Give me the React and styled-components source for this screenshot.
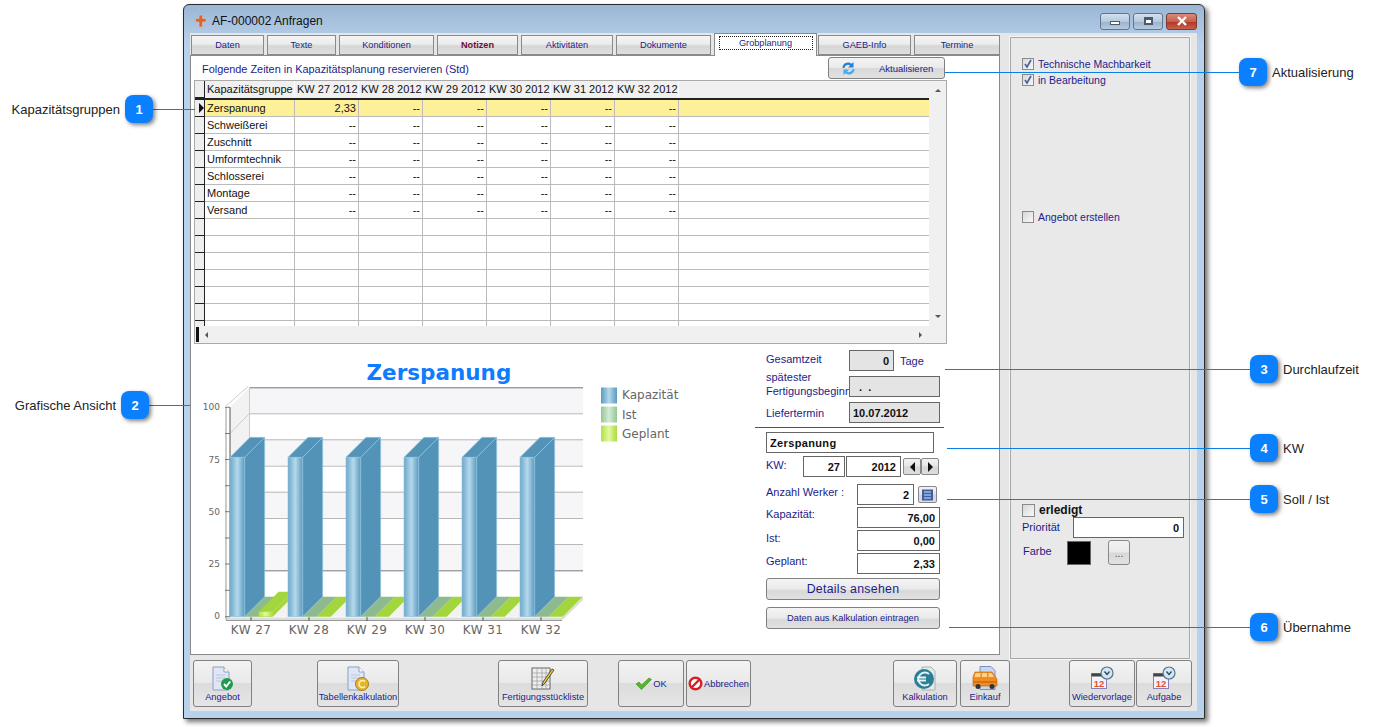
import React from 'react';
import styled, { createGlobalStyle } from 'styled-components';

const GlobalStyle = createGlobalStyle`
  html, body { margin: 0; padding: 0; background: #fff; }
  body { font-family: "Liberation Sans", Arial, sans-serif; }
  * { box-sizing: border-box; }
`;

const NAVY = '#1c1c8a';

const Page = styled.div`
  position: relative;
  width: 1374px;
  height: 727px;
  padding: 4px 0 0 183px;
  overflow: hidden;
  background: #fff;
`;

const Window = styled.div`
  width: 1022px;
  height: 715px;
  display: flex;
  flex-direction: column;
  border: 1px solid #2b2b2b;
  border-radius: 6px 6px 0 0;
  background: linear-gradient(180deg, #9bb6d4 0, #b9d2ec 40px, #b9d2ec 100%);
  box-shadow: 3px 3px 5px rgba(0, 0, 0, 0.55);
`;

const TitleBar = styled.div`
  height: 28px;
  flex: none;
  display: flex;
  align-items: center;
  padding: 4px 7px 0 10px;
`;

const TitleText = styled.span`
  margin-left: 5px;
  font-size: 12px;
  color: #111;
`;

const WindowControls = styled.div`
  margin-left: auto;
  display: flex;
  gap: 3px;
`;

const WindowButton = styled.div`
  width: ${(p) => (p.$close ? 31 : 30)}px;
  height: 17px;
  display: flex;
  align-items: center;
  justify-content: center;
  border: 1px solid ${(p) => (p.$close ? '#7a3b33' : '#5f7690')};
  border-radius: 3px;
  background: ${(p) =>
    p.$close
      ? 'linear-gradient(180deg, #d9897a 0, #c9604e 50%, #b03a28 55%, #c8604a 100%)'
      : 'linear-gradient(180deg, #d3e0ee 0, #b6c9dd 50%, #9db3cb 55%, #b7cbe0 100%)'};
`;

const MinGlyph = styled.span`
  width: 10px;
  height: 4px;
  margin-top: 4px;
  background: #fff;
  border: 1px solid #4a5b70;
`;

const MaxGlyph = styled.span`
  width: 9px;
  height: 8px;
  background: #fff;
  border: 2px solid #4a5b70;
  border-top-width: 3px;
`;

const Client = styled.div`
  flex: 1;
  min-height: 0;
  margin: 0 7px 7px 6px;
  display: flex;
  flex-direction: column;
  background: #e6e6e6;
`;

const UpperRow = styled.div`
  height: 626px;
  flex: none;
  display: flex;
`;

const MainColumn = styled.div`
  width: 810px;
  flex: none;
  padding-top: 2px;
`;

const Tabs = styled.div`
  height: 20px;
  padding-left: 1px;
  display: flex;
  align-items: flex-end;
  gap: 3px;
`;

const Tab = styled.div`
  position: relative;
  width: ${(p) => p.$w}px;
  height: ${(p) => (p.$active ? 23 : 20)}px;
  margin-bottom: ${(p) => (p.$active ? -1 : 0)}px;
  margin-right: ${(p) => (p.$active ? -2 : 0)}px;
  padding-bottom: 1px;
  z-index: ${(p) => (p.$active ? 2 : 0)};
  display: flex;
  align-items: center;
  justify-content: center;
  font-size: 9.2px;
  font-weight: ${(p) => (p.$bold ? 700 : 400)};
  color: ${(p) => (p.$bold ? '#6f1030' : NAVY)};
  border: 1px solid #8a8a8a;
  border-bottom: ${(p) => (p.$active ? 'none' : '1px solid #8a8a8a')};
  background: ${(p) =>
    p.$active ? '#fff' : 'linear-gradient(180deg, #f4f4f4 0, #ececec 45%, #d6d6d6 55%, #dedede 100%)'};
`;

const TabFocus = styled.span`
  width: 94px;
  height: 14px;
  margin-top: -4px;
  display: flex;
  align-items: center;
  justify-content: center;
  border: 1px dotted #222;
`;

const Pane = styled.div`
  height: 600px;
  border: 1px solid #8a8a8a;
  background: #fff;
`;

const PaneHeader = styled.div`
  height: 24px;
  display: flex;
  align-items: center;
  justify-content: space-between;
  padding: 0 54px 0 11px;
`;

const Caption = styled.span`
  font-size: 10.9px;
  color: ${NAVY};
  margin-top: 2px;
`;

const RefreshButton = styled.div`
  width: 117px;
  height: 22px;
  display: flex;
  align-items: center;
  padding-left: 12px;
  gap: 23px;
  font-size: 9.5px;
  color: ${NAVY};
  border: 1px solid #808080;
  border-radius: 3px;
  background: linear-gradient(180deg, #f4f4f4 0, #eaeaea 48%, #d8d8d8 52%, #e2e2e2 100%);
`;

const GridFrame = styled.div`
  width: 753px;
  height: 264px;
  margin-left: 3px;
  display: flex;
  flex-direction: column;
  border: 1px solid #aaa;
`;

const GridTop = styled.div`
  flex: 1;
  min-height: 0;
  display: flex;
`;

const GridTable = styled.div`
  flex: 1;
  min-width: 0;
  overflow: hidden;
`;

const HeaderRow = styled.div`
  height: 19px;
  padding-bottom: 1px;
  display: flex;
  background: #f0f0f0;
  border-bottom: 2px solid #222;
`;

const DataRow = styled.div`
  height: 17px;
  display: flex;
  background: ${(p) => (p.$selected ? '#fdf097' : '#fff')};
  border-bottom: 1px solid #bbb;
`;

const RowMark = styled.div`
  width: 10px;
  flex: none;
  display: flex;
  align-items: center;
  justify-content: flex-end;
  background: #eee;
  border-right: 1px solid #222;
  box-shadow: 0 1px 0 #222;
`;

const Cell = styled.div`
  width: ${(p) => p.$w}px;
  flex: none;
  display: flex;
  align-items: center;
  justify-content: ${(p) => (p.$right ? 'flex-end' : 'flex-start')};
  padding: 0 2px;
  font-size: 11px;
  color: #111;
  white-space: nowrap;
  overflow: hidden;
  border-right: 1px solid #bbb;
`;

const HeaderCell = styled(Cell)`
  border-right: 1px solid #fff;
`;

const VScroll = styled.div`
  width: 17px;
  flex: none;
  display: flex;
  flex-direction: column;
  align-items: center;
  justify-content: space-between;
  padding: 8px 0;
  background: #f0f0f0;
`;

const HScroll = styled.div`
  height: 17px;
  flex: none;
  display: flex;
  align-items: center;
  justify-content: space-between;
  padding: 0 24px 0 1px;
  background: #f0f0f0;
`;

const ScrollStart = styled.div`
  display: flex;
  align-items: center;
  gap: 6px;
`;

const EndMark = styled.span`
  width: 3px;
  height: 15px;
  background: #111;
`;

const Arrow = styled.span`
  width: 0;
  height: 0;
  border-style: solid;
  border-color: transparent;
  border-width: ${(p) => p.$size || 3}px;
  ${(p) => `border-${{ up: 'bottom', down: 'top', left: 'right', right: 'left' }[p.$dir]}-color: ${p.$color || '#555'};`}
  ${(p) => `border-${{ up: 'top', down: 'bottom', left: 'left', right: 'right' }[p.$dir]}-width: 0;`}
`;

const LowerRow = styled.div`
  margin-top: 1px;
  display: flex;
`;

const ChartSvg = styled.svg`
  width: 500px;
  height: 310px;
  flex: none;
  display: block;
`;

const Form = styled.div`
  width: 190px;
  margin-left: 64px;
  padding-left: 11px;
`;

const FormRow = styled.div`
  height: 21px;
  margin-top: ${(p) => p.$mt}px;
  display: flex;
  align-items: center;
`;

const Label = styled.span`
  width: ${(p) => p.$w}px;
  flex: none;
  padding-bottom: ${(p) => p.$up || 0}px;
  font-size: 11px;
  line-height: 14px;
  color: ${NAVY};
  white-space: nowrap;
`;

const Field = styled.div`
  width: ${(p) => p.$w}px;
  height: 21px;
  flex: none;
  display: flex;
  align-items: center;
  justify-content: ${(p) => (p.$left ? 'flex-start' : 'flex-end')};
  padding: 0 ${(p) => (p.$left ? 3 : 4)}px;
  margin-left: ${(p) => p.$ml || 0}px;
  font-size: 11px;
  font-weight: 700;
  color: #111;
  letter-spacing: ${(p) => (p.$wide ? 0.35 : 0)}px;
  border: 1px solid #666;
  background: ${(p) => (p.$readonly ? '#e4e4e4' : '#fff')};
`;

const Unit = styled.span`
  margin-left: 6px;
  font-size: 11px;
  color: ${NAVY};
`;

const Separator = styled.div`
  width: 189px;
  height: 1px;
  margin: 4px 0 4px -11px;
  background: #555;
`;

const SmallButton = styled.div`
  width: ${(p) => p.$w}px;
  height: 17px;
  flex: none;
  display: flex;
  align-items: center;
  justify-content: center;
  margin-left: ${(p) => p.$ml || 0}px;
  border: 1px solid #888;
  border-radius: 2px;
  background: linear-gradient(180deg, #f2f2f2 0, #e6e6e6 48%, #d6d6d6 52%, #dedede 100%);
`;

const WideButton = styled.div`
  width: 174px;
  height: 22px;
  margin-top: ${(p) => p.$mt}px;
  display: flex;
  align-items: center;
  justify-content: center;
  font-size: ${(p) => p.$size}px;
  letter-spacing: ${(p) => (p.$size > 11 ? 0.3 : 0)}px;
  color: ${NAVY};
  border: 1px solid #808080;
  border-radius: 3px;
  background: linear-gradient(180deg, #f4f4f4 0, #eaeaea 48%, #d8d8d8 60%, #e2e2e2 100%);
`;

const SidePanel = styled.div`
  width: 180px;
  height: 622px;
  margin: 4px 0 0 10px;
  padding: 20px 5px 0 11px;
  border: 1px solid #a8a8a8;
  background: #e9e9e9;
  outline: 1px solid #f6f6f6;
`;

const CheckRow = styled.div`
  height: ${(p) => (p.$big ? 14 : 12)}px;
  margin-top: ${(p) => p.$mt || 0}px;
  display: flex;
  align-items: center;
  gap: 4px;
  font-size: ${(p) => (p.$big ? 12 : 10.5)}px;
  font-weight: ${(p) => (p.$big ? 700 : 400)};
  color: ${(p) => (p.$big ? '#111' : NAVY)};
`;

const CheckBox = styled.span`
  width: ${(p) => (p.$big ? 13 : 12)}px;
  height: ${(p) => (p.$big ? 13 : 12)}px;
  flex: none;
  display: flex;
  align-items: center;
  justify-content: center;
  border: 1px solid #8a8a8a;
  background: linear-gradient(135deg, #d8d8d8, #f8f8f8);
`;

const SideRow = styled.div`
  margin-top: ${(p) => p.$mt}px;
  padding-left: ${(p) => p.$indent || 0}px;
  display: flex;
  align-items: center;
`;

const ColorSwatch = styled.span`
  width: 24px;
  height: 24px;
  flex: none;
  background: #000;
  border: 1px solid #666;
`;

const DotsButton = styled.div`
  width: 22px;
  height: 25px;
  margin-left: 17px;
  display: flex;
  align-items: flex-end;
  justify-content: center;
  padding-bottom: 5px;
  font-size: 10px;
  color: #444;
  border: 1px solid #888;
  border-radius: 3px;
  background: linear-gradient(180deg, #f2f2f2 0, #eaeaea 48%, #d8d8d8 52%, #e2e2e2 100%);
`;

const Toolbar = styled.div`
  height: 47px;
  margin-top: 1px;
  padding-left: 3px;
  display: flex;
`;

const ToolButton = styled.div`
  width: ${(p) => p.$w}px;
  flex: none;
  margin-left: ${(p) => p.$ml || 0}px;
  display: flex;
  flex-direction: ${(p) => (p.$inline ? 'row' : 'column')};
  align-items: center;
  justify-content: ${(p) => (p.$inline ? 'center' : 'flex-start')};
  padding-top: ${(p) => (p.$inline ? 0 : 5)}px;
  gap: ${(p) => (p.$inline ? 1 : 0)}px;
  font-size: 9.3px;
  color: ${NAVY};
  white-space: nowrap;
  border: 1px solid #808080;
  border-radius: 3px;
  background: linear-gradient(180deg, #f3f3f3 0, #e9e9e9 48%, #dcdcdc 50%, #e5e5e5 100%);
`;

const ToolLabel = styled.span`
  margin-top: -1px;
  line-height: 12px;
`;

const Callout = styled.div`
  position: absolute;
  top: ${(p) => p.$y - 14}px;
  left: ${(p) => p.$x}px;
  width: 28px;
  height: 28px;
  display: flex;
  align-items: center;
  justify-content: center;
  font-size: 13px;
  font-weight: 700;
  color: #fff;
  border-radius: 8px;
  background: #0a80ff;
  box-shadow: 2px 2px 4px rgba(0, 0, 0, 0.5);
`;

const CalloutLine = styled.div`
  position: absolute;
  top: ${(p) => p.$y}px;
  left: ${(p) => p.$from}px;
  width: ${(p) => p.$to - p.$from}px;
  height: 1px;
  background: #0a7fe6;
`;

const CalloutText = styled.span`
  position: absolute;
  top: ${(p) => p.$y - 8}px;
  ${(p) => (p.$right != null ? `right: ${1374 - p.$right}px;` : `left: ${p.$x}px;`)}
  font-size: 13px;
  line-height: 18px;
  color: #222;
  white-space: nowrap;
`;

const ChartText = styled.text`
  font-family: "DejaVu Sans", Verdana, sans-serif;
  font-size: ${(p) => p.$size}px;
  font-weight: ${(p) => (p.$bold ? 700 : 400)};
  fill: ${(p) => p.$color || '#666'};
`;

const tabs = [
  { label: 'Daten', w: 73 },
  { label: 'Texte', w: 69 },
  { label: 'Konditionen', w: 95 },
  { label: 'Notizen', w: 81, bold: true },
  { label: 'Aktivitäten', w: 92 },
  { label: 'Dokumente', w: 95 },
  { label: 'Grobplanung', w: 103, active: true },
  { label: 'GAEB-Info', w: 93 },
  { label: 'Termine', w: 86 },
];

const weeks = [27, 28, 29, 30, 31, 32];
const groups = ['Zerspanung', 'Schweißerei', 'Zuschnitt', 'Umformtechnik', 'Schlosserei', 'Montage', 'Versand'];
const emptyRows = 7;

const callouts = [
  { n: 1, x: 125, y: 109, from: 153, to: 195, text: 'Kapazitätsgruppen', right: 120 },
  { n: 2, x: 121, y: 405, from: 149, to: 190, text: 'Grafische Ansicht', right: 116 },
  { n: 3, x: 1250, y: 369, from: 945, to: 1250, text: 'Durchlaufzeit', left: 1283 },
  { n: 4, x: 1250, y: 448, from: 947, to: 1250, text: 'KW', left: 1283 },
  { n: 5, x: 1250, y: 499, from: 947, to: 1250, text: 'Soll / Ist', left: 1283 },
  { n: 6, x: 1250, y: 627, from: 949, to: 1250, text: 'Übernahme', left: 1283 },
  { n: 7, x: 1239, y: 72, from: 945, to: 1239, text: 'Aktualisierung', left: 1272 },
];

const AppIcon = () => (
  <svg width="13" height="14" viewBox="0 0 13 14">
    <path d="M5 1h3.5v3.5H12V8H8.5v5H5V8H1.5V4.5H5z" fill="#e2622a" stroke="#c9c0b8" strokeWidth="0.7" />
  </svg>
);

const CloseGlyph = () => (
  <svg width="12" height="10" viewBox="0 0 12 10">
    <path d="M2 1l8 8M10 1L2 9" stroke="#fff" strokeWidth="2.4" />
  </svg>
);

const RefreshIcon = () => (
  <svg width="15" height="15" viewBox="0 0 15 15">
    <path d="M1.5 7a5.5 5.5 0 0 1 9-4.2L12.5 1v5.500H7l2-2A3.500 3.500 0 0 0 3.500 7z" fill="#2281d8" />
    <path d="M13.500 8a5.500 5.500 0 0 1-9 4.200L2.500 14V8.500H8l-2 2A3.500 3.500 0 0 0 11.500 8z" fill="#45aaee" />
  </svg>
);

const TickMark = () => (
  <svg width="10" height="10" viewBox="0 0 10 10">
    <path d="M2 5l2 3 4-7" fill="none" stroke="#3f5f9f" strokeWidth="1.6" />
  </svg>
);

const PlannerIcon = () => (
  <svg width="13" height="12" viewBox="0 0 13 12">
    <rect x="1" y="0.5" width="11" height="11" fill="#3d5ea8" />
    <path d="M3 3h7M3 6h7M3 9h7" stroke="#d7e1f2" strokeWidth="1.2" />
  </svg>
);

const DocBase = () => (
  <>
    <path d="M3 1h11l5 5v18H3z" fill="#dfe7f5" stroke="#8d9fc4" />
    <path d="M14 1v5h5" fill="#fff" stroke="#8d9fc4" />
    <path d="M6 9h9M6 12h9M6 15h6" stroke="#b9c6de" />
  </>
);

const DocCheckIcon = () => (
  <svg width="26" height="26" viewBox="0 0 26 26">
    <DocBase />
    <circle cx="17" cy="18" r="6" fill="#1d9a4a" />
    <path d="M14 18l2.2 2.5 4-5" fill="none" stroke="#fff" strokeWidth="2" />
  </svg>
);

const DocCoinIcon = () => (
  <svg width="26" height="26" viewBox="0 0 26 26">
    <DocBase />
    <circle cx="17" cy="18" r="6.5" fill="#e5b52c" stroke="#a97e16" />
    <path d="M20 15.5a3.5 3.5 0 1 0 0 5" fill="none" stroke="#fff2c0" strokeWidth="1.6" />
  </svg>
);

const SheetPencilIcon = () => (
  <svg width="26" height="26" viewBox="0 0 26 26">
    <rect x="2" y="2" width="18" height="21" fill="#eee" stroke="#666" />
    <path d="M2 7h18M2 11h18M2 15h18M2 19h18M7 2v21M12 2v21M16 2v21" stroke="#999" strokeWidth="0.7" />
    <path d="M24 4l-9 13-3 3 1-4 9-13z" fill="#e8c83c" stroke="#333" strokeWidth="0.8" />
  </svg>
);

const OkIcon = () => (
  <svg width="17" height="13" viewBox="0 0 17 13">
    <path d="M1 7l3-2 2.5 3L14 1l2.500 1.500L6.500 12.500z" fill="#55b52f" stroke="#3b8f1f" strokeWidth="0.6" />
  </svg>
);

const StopIcon = () => (
  <svg width="15" height="15" viewBox="0 0 15 15">
    <circle cx="7.5" cy="7.5" r="5.8" fill="#fff" stroke="#d81f26" strokeWidth="2.4" />
    <path d="M3.5 11.5l8-8" stroke="#d81f26" strokeWidth="2.4" />
  </svg>
);

const EuroDocIcon = () => (
  <svg width="26" height="26" viewBox="0 0 26 26">
    <path d="M10 1h9l4 4v19H10z" fill="#e4e9e8" stroke="#a9b4b2" />
    <circle cx="12" cy="13" r="10" fill="#2b7f95" />
    <path d="M17 8a6.500 6.500 0 1 0 0 10M5 11.500h9M5 14.500h9" fill="none" stroke="#e6f3f6" strokeWidth="1.8" />
  </svg>
);

const VanIcon = () => (
  <svg width="26" height="26" viewBox="0 0 26 26">
    <path d="M8 0.5h11l4 4v19H8z" fill="#c9d5ee" stroke="#7c90bf" />
    <path d="M1 11l2-5h17l5 7v7H1z" fill="#f08c1e" stroke="#b8620c" strokeWidth="0.6" />
    <path d="M3.500 7h5v4h-6zM10 7h5v4h-5zM16.500 7h3l2.500 4h-5.500z" fill="#ffd18a" />
    <rect x="1" y="15" width="24" height="2" fill="#d8700e" />
    <circle cx="6" cy="20.5" r="2.5" fill="#333" />
    <circle cx="20" cy="20.5" r="2.5" fill="#333" />
  </svg>
);

const CalendarClockIcon = () => (
  <svg width="26" height="26" viewBox="0 0 26 26">
    <rect x="2.5" y="7.5" width="15" height="15" fill="#f4f2ff" stroke="#8880b8" />
    <rect x="2.5" y="7.5" width="15" height="3" fill="#444" />
    <text x="10" y="20.5" textAnchor="middle" fontFamily="Liberation Sans" fontSize="9.5" fontWeight="700" fill="#e8501e">12</text>
    <circle cx="18" cy="7" r="6" fill="#d5e6f3" stroke="#54748c" strokeWidth="1.2" />
    <path d="M15.500 5.500l2.500 3 2.500-3" fill="none" stroke="#26485f" strokeWidth="1.3" />
  </svg>
);

// chart coordinates are the reference's own, offset by the viewBox
const DEPTH = 20;
const FLOOR = 266.7;
const tickYs = [57.3, 83.5, 109.5, 135.7, 161.7, 188, 214, 240.3, 266.7];
const wallLines = [37.3, 63.3, 89.3, 115.7, 141.7, 168, 194, 220.3];

const Bar = ({ x, week }) => {
  const top = 107.3;
  const front = 14.7;
  return (
    <g>
      <path d={`M${x + front} ${top}l${DEPTH} ${-DEPTH}V${FLOOR - DEPTH}l${-DEPTH} ${DEPTH}z`} fill="#5493b8" stroke="#9ccbe4" strokeWidth="0.6" />
      <path d={`M${x} ${top}l${DEPTH} ${-DEPTH}h${front}l${-DEPTH} ${DEPTH}z`} fill="#5493b8" stroke="#9ccbe4" strokeWidth="0.6" />
      <rect x={x} y={top} width={front} height={FLOOR - top} fill="url(#barFront)" stroke="#8fc2de" strokeWidth="0.6" />
      <path d={`M${x + front} ${FLOOR}h14l${DEPTH} ${-DEPTH}h-14z`} fill="#8dbb8e" />
      {week === 27 ? (
        <>
          <path d={`M${x + front + 14} 261.7l${DEPTH} ${-DEPTH}h14l${-DEPTH} ${DEPTH}z`} fill="#a3d63c" />
          <path d={`M${x + front + 28} 261.7l${DEPTH} ${-DEPTH}v5l${-DEPTH} ${DEPTH}z`} fill="#a3d63c" />
          <rect x={x + front + 14} y="261.7" width="14" height="5" fill="url(#planFront)" stroke="#a3d63c" strokeWidth="0.5" />
        </>
      ) : (
        <path d={`M${x + front + 14} ${FLOOR}h14l${DEPTH} ${-DEPTH}h-14z`} fill="#a3d63c" />
      )}
      <ChartText x={x + 21} y="284" textAnchor="middle" $size={12} $color="#666" letterSpacing="0.4">KW {week}</ChartText>
      <path d={`M${x + 21} 267v4`} stroke="#555" />
    </g>
  );
};

const Chart = () => (
  <ChartSvg viewBox="1 -5 500 310">
    <defs>
      <linearGradient id="barFront" x1="0" x2="1" y1="0" y2="0">
        <stop offset="0" stopColor="#6ea7c9" />
        <stop offset="0.5" stopColor="#b4d9ec" />
        <stop offset="1" stopColor="#5b9abf" />
      </linearGradient>
      <linearGradient id="planFront" x1="0" x2="1" y1="0" y2="0">
        <stop offset="0" stopColor="#b0e04a" />
        <stop offset="0.5" stopColor="#e4f8a0" />
        <stop offset="1" stopColor="#a8dc40" />
      </linearGradient>
      <linearGradient id="legendBlue" x1="0" x2="1" y1="0" y2="0">
        <stop offset="0" stopColor="#5b9abf" />
        <stop offset="0.5" stopColor="#b4d9ec" />
        <stop offset="1" stopColor="#5b9abf" />
      </linearGradient>
      <linearGradient id="legendGreen" x1="0" x2="1" y1="0" y2="0">
        <stop offset="0" stopColor="#93c596" />
        <stop offset="0.5" stopColor="#d5ecd5" />
        <stop offset="1" stopColor="#93c596" />
      </linearGradient>
    </defs>
    <ChartText x="176.5" y="29.5" $size={21.5} $bold $color="#0f7bff">Zerspanung</ChartText>

    {wallLines.map((y, i) => (
      <g key={y}>
        {i % 2 === 0 && <rect x="59.3" y={y} width="333.7" height="26" fill="#f6f6f8" />}
        <path d={`M59.3 ${y + 0.5}H393`} stroke={i === 0 || i === 7 ? '#777' : '#b8b8b8'} />
      </g>
    ))}
    <path d="M40 57.3L59.3 37.3V246.7L40 266.7z" fill="#f2f2f2" />
    <path d="M59.5 37.3V246.7" stroke="#ccc" />
    <path d="M36 56L58 36.5" stroke="#ccc" />
    <path d="M40 83.5L59.3 63.5" stroke="#ccc" />
    <path d="M40 266.7L59.3 246.7H393L372 266.7z" fill="#f2f2f2" />
    <path d="M36 267.5H372L393 247V250L372 270.5H36z" fill="#dcdcdc" />
    <path d="M36 270.5H372" stroke="#999" />

    <path d="M36 57.3V270" stroke="#999" />
    <path d="M40 57.3V267" stroke="#555" />
    {tickYs.map((y) => (
      <path key={y} d={`M35 ${y}h5`} stroke="#777" />
    ))}
    {[[100, 57], [75, 109.5], [50, 162], [25, 214], [0, 266]].map(([v, y]) => (
      <ChartText key={v} x="30" y={y + 3} textAnchor="end" $size={9}>{v}</ChartText>
    ))}

    {weeks.map((w, i) => (
      <Bar key={w} x={40 + i * 58} week={w} />
    ))}

    <rect x="411" y="37.5" width="16" height="16" fill="url(#legendBlue)" />
    <rect x="411" y="56.5" width="16" height="16" fill="url(#legendGreen)" />
    <rect x="411" y="75.5" width="16" height="16" fill="url(#planFront)" />
    <ChartText x="432" y="49" $size={12}>Kapazität</ChartText>
    <ChartText x="432" y="68.5" $size={12}>Ist</ChartText>
    <ChartText x="432" y="88" $size={12}>Geplant</ChartText>
  </ChartSvg>
);

const CapacityGrid = () => (
  <GridFrame>
    <GridTop>
      <GridTable>
        <HeaderRow>
          <RowMark />
          <HeaderCell $w={90}>Kapazitätsgruppe</HeaderCell>
          {weeks.map((w) => (
            <HeaderCell key={w} $w={64}>KW {w} 2012</HeaderCell>
          ))}
        </HeaderRow>
        {groups.map((g, i) => (
          <DataRow key={g} $selected={i === 0}>
            <RowMark>{i === 0 && <Arrow $dir="right" $size={5} $color="#111" />}</RowMark>
            <Cell $w={90}>{g}</Cell>
            {weeks.map((w) => (
              <Cell key={w} $w={64} $right>{i === 0 && w === 27 ? '2,33' : '--'}</Cell>
            ))}
          </DataRow>
        ))}
        {Array.from({ length: emptyRows }, (_, i) => (
          <DataRow key={i}>
            <RowMark />
            <Cell $w={90} />
            {weeks.map((w) => (
              <Cell key={w} $w={64} />
            ))}
          </DataRow>
        ))}
      </GridTable>
      <VScroll>
        <Arrow $dir="up" />
        <Arrow $dir="down" />
      </VScroll>
    </GridTop>
    <HScroll>
      <ScrollStart>
        <EndMark />
        <Arrow $dir="left" />
      </ScrollStart>
      <Arrow $dir="right" />
    </HScroll>
  </GridFrame>
);

const DetailForm = () => (
  <Form>
    <FormRow $mt={5}>
      <Label $w={83} $up={3}>Gesamtzeit</Label>
      <Field $w={45} $readonly>0</Field>
      <Unit>Tage</Unit>
    </FormRow>
    <FormRow $mt={5}>
      <Label $w={83} $up={5}>spätester<br />Fertigungsbeginn</Label>
      <Field $w={91} $readonly $left>&nbsp;&nbsp;.&nbsp;&nbsp;.</Field>
    </FormRow>
    <FormRow $mt={5}>
      <Label $w={83} $up={0}>Liefertermin</Label>
      <Field $w={91} $readonly $left>10.07.2012</Field>
    </FormRow>
    <Separator />
    <Field $w={168} $left $wide>Zerspanung</Field>
    <FormRow $mt={3}>
      <Label $w={37} $up={3}>KW:</Label>
      <Field $w={42}>27</Field>
      <Field $w={55} $ml={1}>2012</Field>
      <SmallButton $w={18} $ml={2}><Arrow $dir="left" $size={5} $color="#111" /></SmallButton>
      <SmallButton $w={18}><Arrow $dir="right" $size={5} $color="#111" /></SmallButton>
    </FormRow>
    <FormRow $mt={7}>
      <Label $w={91} $up={5}>Anzahl Werker :</Label>
      <Field $w={57}>2</Field>
      <SmallButton $w={19} $ml={4}><PlannerIcon /></SmallButton>
    </FormRow>
    <FormRow $mt={2}>
      <Label $w={91} $up={7}>Kapazität:</Label>
      <Field $w={83}>76,00</Field>
    </FormRow>
    <FormRow $mt={2}>
      <Label $w={91} $up={5}>Ist:</Label>
      <Field $w={83}>0,00</Field>
    </FormRow>
    <FormRow $mt={2}>
      <Label $w={91} $up={5}>Geplant:</Label>
      <Field $w={83}>2,33</Field>
    </FormRow>
    <WideButton $mt={4} $size={12.3}>Details ansehen</WideButton>
    <WideButton $mt={7} $size={9.3}>Daten aus Kalkulation eintragen</WideButton>
  </Form>
);

const Side = () => (
  <SidePanel>
    <CheckRow><CheckBox><TickMark /></CheckBox>Technische Machbarkeit</CheckRow>
    <CheckRow $mt={4}><CheckBox><TickMark /></CheckBox>in Bearbeitung</CheckRow>
    <CheckRow $mt={125}><CheckBox />Angebot erstellen</CheckRow>
    <CheckRow $mt={280} $big><CheckBox $big />erledigt</CheckRow>
    <SideRow $mt={0}>
      <Label $w={51} $up={2}>Priorität</Label>
      <Field $w={111}>0</Field>
    </SideRow>
    <SideRow $mt={2} $indent={1}>
      <Label $w={44} $up={4}>Farbe</Label>
      <ColorSwatch />
      <DotsButton>...</DotsButton>
    </SideRow>
  </SidePanel>
);

const BottomBar = () => (
  <Toolbar>
    <ToolButton $w={59}><DocCheckIcon /><ToolLabel>Angebot</ToolLabel></ToolButton>
    <ToolButton $w={82} $ml={65}><DocCoinIcon /><ToolLabel>Tabellenkalkulation</ToolLabel></ToolButton>
    <ToolButton $w={90} $ml={99}><SheetPencilIcon /><ToolLabel>Fertigungsstückliste</ToolLabel></ToolButton>
    <ToolButton $w={66} $ml={30} $inline><OkIcon />OK</ToolButton>
    <ToolButton $w={65} $ml={2} $inline><StopIcon />Abbrechen</ToolButton>
    <ToolButton $w={64} $ml={142}><EuroDocIcon /><ToolLabel>Kalkulation</ToolLabel></ToolButton>
    <ToolButton $w={50} $ml={3}><VanIcon /><ToolLabel>Einkauf</ToolLabel></ToolButton>
    <ToolButton $w={66} $ml={59}><CalendarClockIcon /><ToolLabel>Wiedervorlage</ToolLabel></ToolButton>
    <ToolButton $w={56} $ml={1}><CalendarClockIcon /><ToolLabel>Aufgabe</ToolLabel></ToolButton>
  </Toolbar>
);

export default function App() {
  return (
    <Page>
      <GlobalStyle />
      <Window>
        <TitleBar>
          <AppIcon />
          <TitleText>AF-000002 Anfragen</TitleText>
          <WindowControls>
            <WindowButton><MinGlyph /></WindowButton>
            <WindowButton><MaxGlyph /></WindowButton>
            <WindowButton $close><CloseGlyph /></WindowButton>
          </WindowControls>
        </TitleBar>
        <Client>
          <UpperRow>
            <MainColumn>
              <Tabs>
                {tabs.map((t) => (
                  <Tab key={t.label} $w={t.w} $bold={t.bold} $active={t.active}>
                    {t.active ? <TabFocus>{t.label}</TabFocus> : t.label}
                  </Tab>
                ))}
              </Tabs>
              <Pane>
                <PaneHeader>
                  <Caption>Folgende Zeiten in Kapazitätsplanung reservieren (Std)</Caption>
                  <RefreshButton><RefreshIcon />Aktualisieren</RefreshButton>
                </PaneHeader>
                <CapacityGrid />
                <LowerRow>
                  <Chart />
                  <DetailForm />
                </LowerRow>
              </Pane>
            </MainColumn>
            <Side />
          </UpperRow>
          <BottomBar />
        </Client>
      </Window>
      {callouts.map((c) => (
        <React.Fragment key={c.n}>
          <CalloutLine $y={c.y} $from={c.from} $to={c.to} />
          <Callout $x={c.x} $y={c.y}>{c.n}</Callout>
          <CalloutText $y={c.y} $x={c.left} $right={c.right}>{c.text}</CalloutText>
        </React.Fragment>
      ))}
    </Page>
  );
}
